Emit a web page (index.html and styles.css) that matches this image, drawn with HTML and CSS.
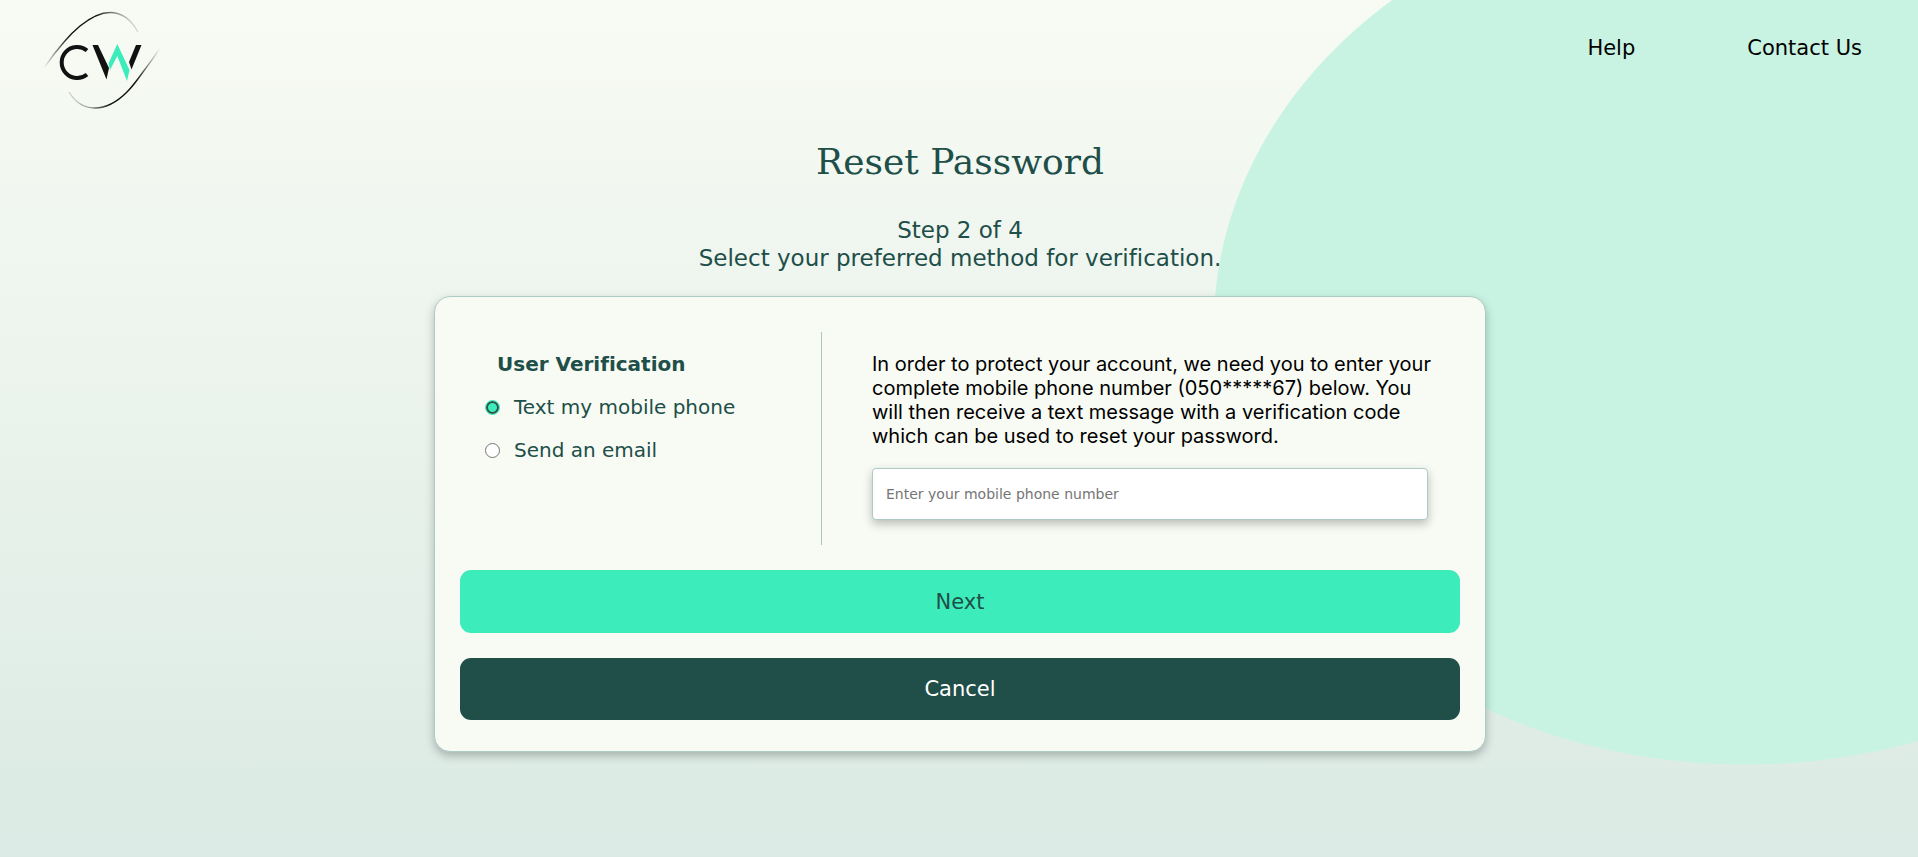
FILE: index.html
```html
<!DOCTYPE html>
<html lang="en">
<head>
  <meta charset="utf-8">
  <meta name="viewport" content="width=device-width, initial-scale=1">
  <title>Reset Password</title>
  <link rel="stylesheet" href="styles.css">
</head>
<body>
  <div class="backdrop" aria-hidden="true"></div>
  <header class="header">
    <a class="logo" href="#" aria-label="CW home">
      <svg width="120" height="104" viewBox="0 0 120 104" fill="none">
        <defs>
          <linearGradient id="arc-top" x1="2" y1="60" x2="97" y2="14" gradientUnits="userSpaceOnUse">
            <stop offset="0" stop-color="#111" stop-opacity="0"/>
            <stop offset=".35" stop-color="#111"/>
            <stop offset=".65" stop-color="#111"/>
            <stop offset="1" stop-color="#111" stop-opacity="0"/>
          </linearGradient>
          <linearGradient id="arc-bottom" x1="118" y1="40" x2="23" y2="90" gradientUnits="userSpaceOnUse">
            <stop offset="0" stop-color="#111" stop-opacity="0"/>
            <stop offset=".35" stop-color="#111"/>
            <stop offset=".65" stop-color="#111"/>
            <stop offset="1" stop-color="#111" stop-opacity="0"/>
          </linearGradient>
        </defs>
        <path d="M2 60C8 51 15 42 22 34C27 28 32 23 38 18C48 10 58 4.500 68 4.500C81 4.500 90 13 96 24" stroke="url(#arc-top)" stroke-width="1.400"/>
        <path d="M118 40C113 48 107 56 101 64C96 71 91 78 85 84C75 94 64 100 53 100C42 100 33 94 27 84" stroke="url(#arc-bottom)" stroke-width="1.400"/>
        <path d="M45 42.500A15.500 15.500 0 1 0 45 66.500" stroke="#111" stroke-width="4"/>
        <path d="M50.500 37H56L67 60L64.500 71.500Z" fill="#111"/>
        <path d="M75.300 36L87.500 62L85 73L75.300 48L68 62L66.500 55.500Z" fill="#3cedbb"/>
        <path d="M94 37H99.500L89.500 61.500L87 54Z" fill="#111"/>
      </svg>
    </a>
    <nav class="nav">
      <a href="#">Help</a>
      <a href="#">Contact Us</a>
    </nav>
  </header>

  <main class="main">
    <h1 class="title">Reset Password</h1>
    <p class="intro">Step 2 of 4<br>Select your preferred method for verification.</p>

    <form class="card">
      <div class="columns">
        <fieldset class="methods">
          <legend class="methods-title">User Verification</legend>
          <label class="method"><input type="radio" name="method" value="text" checked>Text my mobile phone</label>
          <label class="method"><input type="radio" name="method" value="email">Send an email</label>
        </fieldset>
        <div class="details">
          <label class="message" for="phone">In order to protect your account, we need you to enter your complete mobile phone number (050*****67) below. You will then receive a text message with a verification code which can be used to reset your password.</label>
          <input class="phone" id="phone" type="tel" placeholder="Enter your mobile phone number">
        </div>
      </div>
      <button class="button button-next" type="submit">Next</button>
      <button class="button button-cancel" type="button">Cancel</button>
    </form>
  </main>
</body>
</html>
```

FILE: styles.css
```css
* {
  box-sizing: border-box;
}

body {
  position: relative;
  min-height: 100vh;
  margin: 0;
  overflow-x: hidden;
  background: linear-gradient(#f8fbf4, #dbeae4);
  color: #204e48;
  font-family: Verdana, "DejaVu Sans", sans-serif;
  font-variant-ligatures: no-common-ligatures;
}

.backdrop {
  position: absolute;
  inset: 0;
  background: radial-gradient(ellipse 532px 438px at 91% 327px, #c8f3e2 calc(100% - 1px), transparent);
}

.header {
  position: relative;
  display: flex;
  justify-content: space-between;
  align-items: flex-start;
  padding: 8px 56px 0 42px;
}

.logo {
  display: block;
}

.logo svg {
  display: block;
}

.nav {
  display: flex;
  gap: 112px;
  padding-top: 27px;
}

.nav a {
  color: #000;
  font-size: 21px;
  line-height: 26px;
  text-decoration: none;
}

.main {
  position: relative;
  padding: 26px 16px 40px 18px;
}

.title {
  margin: 0;
  font-family: Georgia, "DejaVu Serif", serif;
  font-size: 36px;
  font-weight: 400;
  line-height: 48px;
  text-align: center;
}

.intro {
  margin: 30px 0 24px;
  font-size: 23px;
  line-height: 28px;
  text-align: center;
}

.card {
  display: flex;
  flex-direction: column;
  max-width: 1052px;
  margin: 0 auto;
  padding: 35px 25px 31px;
  border: 1px solid #aecac6;
  border-radius: 16px;
  background: #f8fbf4;
  box-shadow: 0 4px 10px rgb(0 0 0 / 25%);
}

.columns {
  display: grid;
  grid-template-columns: 362px 1fr;
  margin-bottom: 25px;
}

.methods {
  min-width: 0;
  margin: 0;
  padding: 20px 0 0 25px;
  border: 0;
  border-right: 1px solid #aec4c0;
}

.methods-title {
  float: left;
  width: 100%;
  padding: 0 0 0 12px;
  font-size: 20px;
  font-weight: 700;
  line-height: 24px;
}

.method {
  display: flex;
  clear: both;
  align-items: center;
  gap: 14px;
  padding-top: 19px;
  font-size: 20px;
  line-height: 24px;
}

.method input {
  width: 15px;
  height: 15px;
  margin: 0;
  appearance: none;
  border: 1px solid #767676;
  border-radius: 50%;
  background: #fff;
}

.method input:checked {
  border: 1px solid #3cedbb;
  background: #3cedbb;
  box-shadow: inset 0 0 0 2px #35504a;
}

.details {
  padding: 20px 24px 25px 50px;
}

.message {
  display: block;
  margin-bottom: 20px;
  color: #000;
  font-family: Inter, sans-serif;
  font-size: 20px;
  line-height: 24px;
}

.phone {
  display: block;
  width: calc(100% - 8px);
  height: 52px;
  padding: 0 13px;
  border: 1px solid #aecac6;
  border-radius: 4px;
  background: #fff;
  box-shadow: 0 4px 10px rgb(0 0 0 / 25%);
  font-family: inherit;
  font-size: 14px;
}

.phone::placeholder {
  color: #757575;
}

.button {
  height: 63px;
  border: 0;
  border-radius: 11px;
  font-family: inherit;
  font-size: 21px;
}

.button-next {
  background: #3cedbb;
  color: #204e48;
}

.button-cancel {
  height: 62px;
  margin-top: 25px;
  background: #204e48;
  color: #fff;
}
```
